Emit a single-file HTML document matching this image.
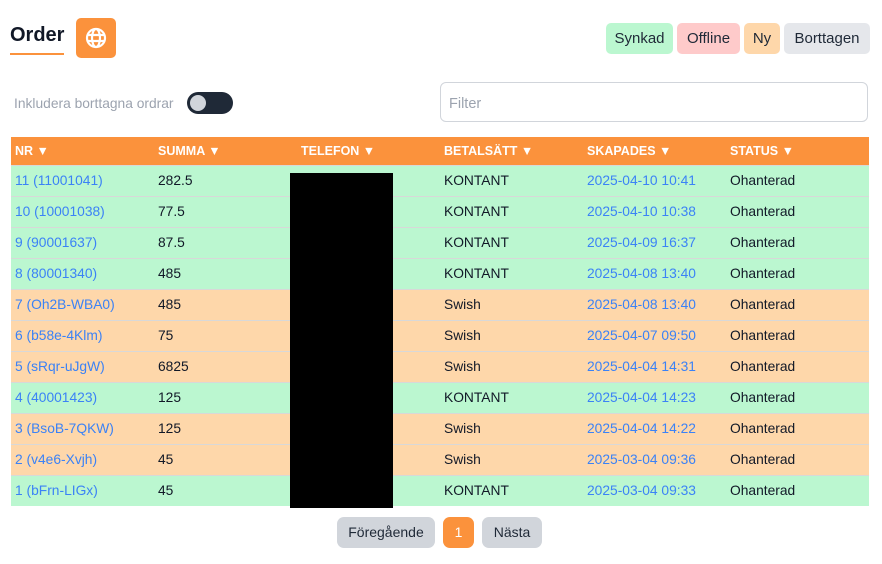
<!DOCTYPE html>
<html><head><style>
body{margin:0;width:882px;height:564px;background:#fff;font-family:"Liberation Sans",sans-serif;position:relative;overflow:hidden;color:#111827}
.a{position:absolute}
.badge{position:absolute;top:23px;height:31px;line-height:31px;border-radius:5px;font-size:15px;text-align:center;color:#1f2937}
table{position:absolute;left:11px;top:137px;width:858px;border-collapse:collapse;font-size:13.8px}
th{background:#fb923c;color:#fff;text-align:left;height:28px;font-size:12.5px;font-weight:bold;padding:0 0 0 4px}
td{height:30px;line-height:16px;padding:0 0 0 4px;border-top:1px solid #d8d8d8}
tr.g td{background:#bbf7d0}tr.o td{background:#fed7aa}
.l{color:#3b82f6}
.btn{position:absolute;top:517px;height:31px;line-height:31px;border-radius:7px;background:#d1d5db;font-size:14px;text-align:center;color:#1f2937}
</style></head><body>
<div class="a" style="left:10px;top:24px;font-size:20px;font-weight:bold;color:#111827">Order</div>
<div class="a" style="left:10px;top:53px;width:54px;height:2px;background:#fb923c"></div>
<div class="a" style="left:76px;top:18px;width:40px;height:40px;background:#fb923c;border-radius:5px">
<svg width="40" height="40" viewBox="0 0 40 40"><g fill="none" stroke="#fff" stroke-width="2.2"><circle cx="20" cy="20" r="9"/><ellipse cx="20" cy="20" rx="4" ry="9"/><line x1="11" y1="17" x2="29" y2="17"/><line x1="11" y1="23" x2="29" y2="23"/></g></svg></div>
<div class="badge" style="left:606px;width:67px;background:#bbf7d0">Synkad</div>
<div class="badge" style="left:677px;width:63px;background:#fecaca">Offline</div>
<div class="badge" style="left:744px;width:36px;background:#fed7aa">Ny</div>
<div class="badge" style="left:784px;width:86px;background:#e5e7eb">Borttagen</div>
<div class="a" style="left:14px;top:96px;font-size:13.8px;color:#9ca3af">Inkludera borttagna ordrar</div>
<div class="a" style="left:187px;top:92px;width:46px;height:22px;border-radius:11px;background:#1f2937"><div style="position:absolute;left:3px;top:3px;width:16px;height:16px;border-radius:50%;background:#d1d5db"></div></div>
<div class="a" style="left:440px;top:82px;width:428px;height:40px;border:1px solid #d1d5db;border-radius:6px;box-sizing:border-box;padding:13px 8px;font-size:14.5px;color:#9ca3af">Filter</div>
<table>
<tr><th style="width:139px">NR ▼</th><th style="width:139px">SUMMA ▼</th><th style="width:139px">TELEFON ▼</th><th style="width:139px">BETALSÄTT ▼</th><th style="width:139px">SKAPADES ▼</th><th>STATUS ▼</th></tr>
<tr class="g"><td class="l">11 (11001041)</td><td>282.5</td><td></td><td>KONTANT</td><td class="l">2025-04-10 10:41</td><td>Ohanterad</td></tr>
<tr class="g"><td class="l">10 (10001038)</td><td>77.5</td><td></td><td>KONTANT</td><td class="l">2025-04-10 10:38</td><td>Ohanterad</td></tr>
<tr class="g"><td class="l">9 (90001637)</td><td>87.5</td><td></td><td>KONTANT</td><td class="l">2025-04-09 16:37</td><td>Ohanterad</td></tr>
<tr class="g"><td class="l">8 (80001340)</td><td>485</td><td></td><td>KONTANT</td><td class="l">2025-04-08 13:40</td><td>Ohanterad</td></tr>
<tr class="o"><td class="l">7 (Oh2B-WBA0)</td><td>485</td><td></td><td>Swish</td><td class="l">2025-04-08 13:40</td><td>Ohanterad</td></tr>
<tr class="o"><td class="l">6 (b58e-4Klm)</td><td>75</td><td></td><td>Swish</td><td class="l">2025-04-07 09:50</td><td>Ohanterad</td></tr>
<tr class="o"><td class="l">5 (sRqr-uJgW)</td><td>6825</td><td></td><td>Swish</td><td class="l">2025-04-04 14:31</td><td>Ohanterad</td></tr>
<tr class="g"><td class="l">4 (40001423)</td><td>125</td><td></td><td>KONTANT</td><td class="l">2025-04-04 14:23</td><td>Ohanterad</td></tr>
<tr class="o"><td class="l">3 (BsoB-7QKW)</td><td>125</td><td></td><td>Swish</td><td class="l">2025-04-04 14:22</td><td>Ohanterad</td></tr>
<tr class="o"><td class="l">2 (v4e6-Xvjh)</td><td>45</td><td></td><td>Swish</td><td class="l">2025-03-04 09:36</td><td>Ohanterad</td></tr>
<tr class="g"><td class="l">1 (bFrn-LIGx)</td><td>45</td><td></td><td>KONTANT</td><td class="l">2025-03-04 09:33</td><td>Ohanterad</td></tr>
</table>
<div class="a" style="left:290px;top:173px;width:103px;height:335px;background:#000"></div>
<div class="btn" style="left:337px;width:98px">Föregående</div>
<div class="btn" style="left:443px;width:31px;background:#fb923c;color:#fff">1</div>
<div class="btn" style="left:482px;width:60px">Nästa</div>
</body></html>
